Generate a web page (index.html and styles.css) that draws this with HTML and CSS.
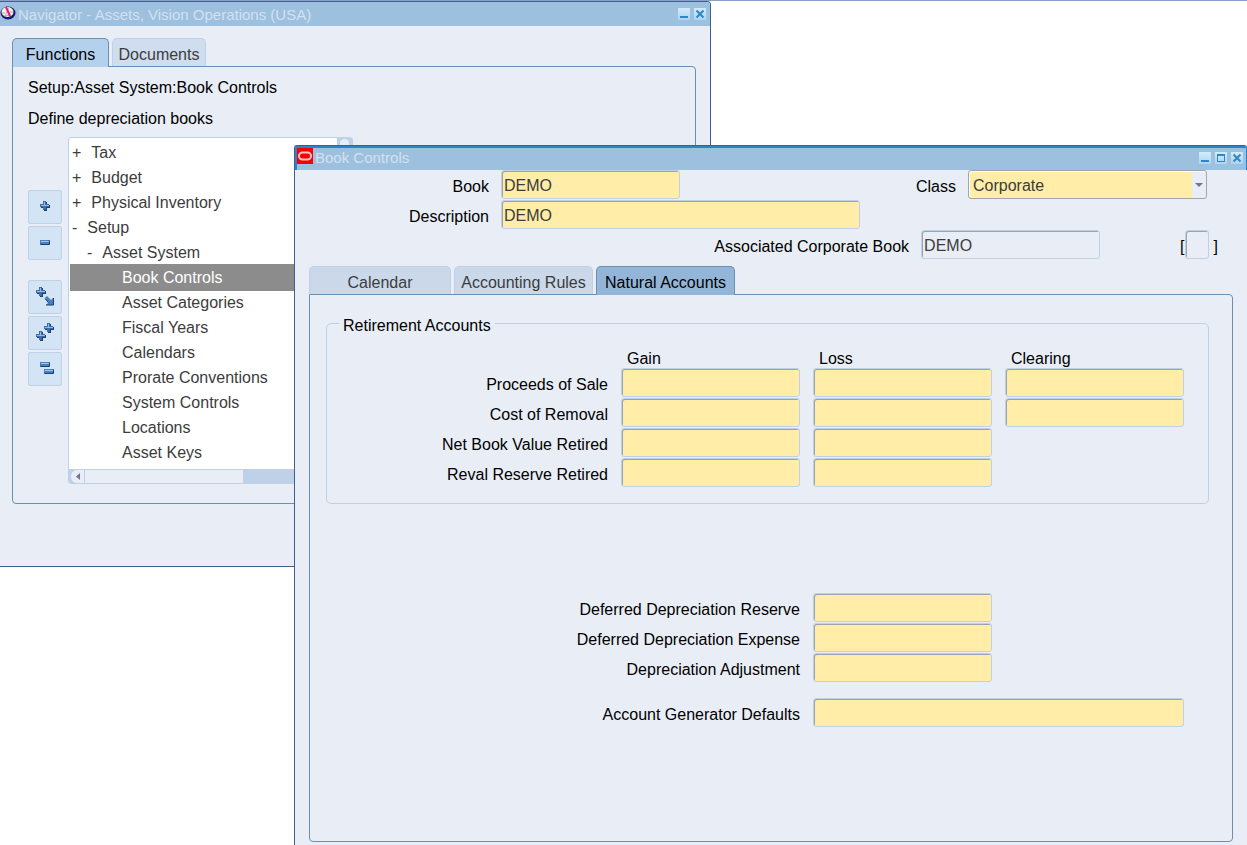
FILE: index.html
```html
<!DOCTYPE html>
<html lang="en">
<head>
<meta charset="utf-8">
<title>Book Controls</title>
<link rel="stylesheet" href="styles.css">
</head>
<body>
<main class="desktop">

  <section class="window navigator" aria-label="Navigator">
    <header class="titlebar">
      <svg class="app-icon" width="16" height="16" viewBox="0 0 16 16" aria-hidden="true">
        <ellipse cx="8" cy="8" rx="7.5" ry="6.5" fill="#1a1a6e"/>
        <ellipse cx="7.500" cy="7" rx="6" ry="5" fill="#f4f0e4"/>
        <path d="M2 8h3M10 7h3M4 11l7-1" stroke="#b4b09c" stroke-width="1"/>
        <path d="M9 3l-4 8" stroke="#e0b860" stroke-width="1"/>
        <path d="M6 2l4 9" stroke="#e0149c" stroke-width="2"/>
      </svg>
      <h1 class="title">Navigator - Assets, Vision Operations (USA)</h1>
      <div class="win-buttons">
        <button class="win-btn" aria-label="Minimize"><svg width="12" height="12" viewBox="0 0 12 12"><path d="M2 8h8v2H2z" fill="#2f86c6"/></svg></button>
        <button class="win-btn" aria-label="Close"><svg width="12" height="12" viewBox="0 0 12 12"><path d="M2.500 2.500l7 7M9.500 2.500l-7 7" stroke="#2f86c6" stroke-width="2"/></svg></button>
      </div>
    </header>
    <div class="nav-body">
      <div class="tabs" role="tablist">
        <button class="tab tab-functions" role="tab" aria-selected="true">Functions</button>
        <button class="tab tab-documents" role="tab" aria-selected="false">Documents</button>
      </div>
      <div class="panel nav-panel">
        <p class="nav-text">Setup:Asset System:Book Controls</p>
        <p class="nav-text">Define depreciation books</p>
        <div class="nav-main">
          <div class="toolbar">
            <button class="tool" aria-label="Expand"><svg width="34" height="34" viewBox="0 0 34 34"><use href="#plus" x="12" y="11"/></svg></button>
            <button class="tool" aria-label="Collapse"><svg width="34" height="34" viewBox="0 0 34 34"><use href="#minus" x="12" y="14"/></svg></button>
            <button class="tool tool-group" aria-label="Expand branch"><svg width="34" height="34" viewBox="0 0 34 34"><use href="#plus" x="8" y="7"/><path d="M17 18l2-2 4 4 2-2v7h-7l2-2z" fill="#4a7fc0"/><path d="M17 18.500l3.500 4M18 25h7.500v-7" fill="none" stroke="#1f3f70"/></svg></button>
            <button class="tool" aria-label="Expand all"><svg width="34" height="34" viewBox="0 0 34 34"><use href="#plus" x="16" y="7"/><use href="#plus" x="8" y="15"/></svg></button>
            <button class="tool" aria-label="Collapse all"><svg width="34" height="34" viewBox="0 0 34 34"><use href="#minus" x="12" y="10"/><use href="#minus" x="16" y="17"/></svg></button>
          </div>
          <div class="tree">
            <div class="tree-view">
              <ul class="tree-list">
                <li class="node"><button class="toggle">+</button>Tax</li>
                <li class="node"><button class="toggle">+</button>Budget</li>
                <li class="node"><button class="toggle">+</button>Physical Inventory</li>
                <li class="node"><button class="toggle">-</button>Setup</li>
                <li class="node node-sub"><button class="toggle">-</button>Asset System</li>
                <li class="node node-leaf selected">Book Controls</li>
                <li class="node node-leaf">Asset Categories</li>
                <li class="node node-leaf">Fiscal Years</li>
                <li class="node node-leaf">Calendars</li>
                <li class="node node-leaf">Prorate Conventions</li>
                <li class="node node-leaf">System Controls</li>
                <li class="node node-leaf">Locations</li>
                <li class="node node-leaf">Asset Keys</li>
              </ul>
              <div class="vbar"><span class="vbar-up"></span></div>
            </div>
            <div class="hbar">
              <button class="hbar-left" aria-label="Scroll left"><svg width="13" height="13" viewBox="0 0 13 13"><path d="M9 3v7L5 6.500z" fill="#6e7590"/></svg></button>
              <span class="hbar-thumb"></span>
            </div>
          </div>
        </div>
      </div>
    </div>
  </section>

  <section class="window book" aria-label="Book Controls">
    <header class="titlebar book-titlebar">
      <svg class="app-icon" width="16" height="16" viewBox="0 0 16 16" aria-hidden="true">
        <path d="M0 0h16v16H0z" fill="#f80000"/>
        <rect x="2" y="4.500" width="12" height="7" rx="3.500" fill="none" stroke="#ffc4c4" stroke-width="2"/>
      </svg>
      <h2 class="title">Book Controls</h2>
      <div class="win-buttons">
        <button class="win-btn" aria-label="Minimize"><svg width="12" height="12" viewBox="0 0 12 12"><path d="M2 8h8v2H2z" fill="#2f86c6"/></svg></button>
        <button class="win-btn" aria-label="Maximize"><svg width="12" height="12" viewBox="0 0 12 12"><path d="M2 2h8v8H2zM3 4v5h6V4z" fill="#2f86c6" fill-rule="evenodd"/></svg></button>
        <button class="win-btn" aria-label="Close"><svg width="12" height="12" viewBox="0 0 12 12"><path d="M2.500 2.500l7 7M9.500 2.500l-7 7" stroke="#2f86c6" stroke-width="2"/></svg></button>
      </div>
    </header>

    <form class="book-form">
      <div class="head">
        <div class="row">
          <label class="label head-label" for="book">Book</label>
          <input class="field" id="book" value="DEMO">
          <div class="row-end">
            <label class="label" for="class">Class</label>
            <div class="select-wrap">
              <select class="select" id="class"><option>Corporate</option></select>
            </div>
          </div>
        </div>
        <div class="row">
          <label class="label head-label" for="desc">Description</label>
          <input class="field field-desc" id="desc" value="DEMO">
        </div>
        <div class="row">
          <div class="row-end row-assoc">
            <label class="label" for="assoc">Associated Corporate Book</label>
            <input class="field readonly" id="assoc" value="DEMO" readonly>
            <div class="flex-field">
              <span class="bracket">[</span>
              <input class="field readonly flex-input" aria-label="Descriptive flexfield" readonly>
              <span class="bracket bracket-end">]</span>
            </div>
          </div>
        </div>
      </div>

      <div class="tabs book-tabs" role="tablist">
        <button type="button" class="tab tab-calendar" role="tab" aria-selected="false">Calendar</button>
        <button type="button" class="tab tab-rules" role="tab" aria-selected="false">Accounting Rules</button>
        <button type="button" class="tab tab-natural" role="tab" aria-selected="true">Natural Accounts</button>
      </div>

      <div class="panel book-panel">
        <fieldset class="retirement">
          <legend class="legend">Retirement Accounts</legend>
          <div class="grid accounts">
            <span></span>
            <span class="col-head" id="gain">Gain</span>
            <span class="col-head" id="loss">Loss</span>
            <span class="col-head" id="clearing">Clearing</span>

            <label class="label" id="sale" for="sale-gain">Proceeds of Sale</label>
            <input class="field" id="sale-gain">
            <input class="field" aria-labelledby="sale loss">
            <input class="field" aria-labelledby="sale clearing">

            <label class="label" id="removal" for="removal-gain">Cost of Removal</label>
            <input class="field" id="removal-gain">
            <input class="field" aria-labelledby="removal loss">
            <input class="field" aria-labelledby="removal clearing">

            <label class="label" id="nbv" for="nbv-gain">Net Book Value Retired</label>
            <input class="field" id="nbv-gain">
            <input class="field" aria-labelledby="nbv loss">
            <span></span>

            <label class="label" id="reval" for="reval-gain">Reval Reserve Retired</label>
            <input class="field" id="reval-gain">
            <input class="field" aria-labelledby="reval loss">
            <span></span>
          </div>
        </fieldset>

        <div class="grid defaults">
          <label class="label" for="reserve">Deferred Depreciation Reserve</label>
          <input class="field" id="reserve">
          <label class="label" for="expense">Deferred Depreciation Expense</label>
          <input class="field" id="expense">
          <label class="label" for="adjust">Depreciation Adjustment</label>
          <input class="field" id="adjust">
        </div>
        <div class="grid defaults generator">
          <label class="label" for="generator">Account Generator Defaults</label>
          <input class="field field-wide" id="generator">
        </div>
      </div>
    </form>
  </section>

</main>

<svg width="0" height="0" class="symbols" aria-hidden="true">
  <symbol id="plus" width="10" height="10" viewBox="0 0 10 10">
    <path d="M4 1h3v3h3v3H7v3H4V7H1V4h3z" fill="#1f3f70"/>
    <path d="M3 0h3v3h3v3H6v3H3V6H0V3h3z" fill="#3f6cab"/>
    <path d="M4 1h1v3h4v1H1V4h3z" fill="#8fc0ea"/>
  </symbol>
  <symbol id="minus" width="10" height="5" viewBox="0 0 10 5">
    <rect width="10" height="5" rx="1" fill="#1f3f70"/>
    <rect width="9" height="4" rx="1" fill="#4a7fc0"/>
    <path d="M1 1h8v1H1z" fill="#9fcaf0"/>
  </symbol>
</svg>
</body>
</html>
```
FILE: styles.css
```css
* { box-sizing: border-box; }

body {
  margin: 0;
  background: #fff;
  color: #000;
  font: 16px/20px "Liberation Sans", Arial, sans-serif;
}

button, input, select { font: inherit; color: inherit; margin: 0; }
button { border: 0; padding: 0; background: none; }
svg { display: block; }
.symbols { position: absolute; }

.desktop {
  position: relative;
  min-height: 100vh;
  border-top: 1px solid #8aa0c4;
  overflow: hidden;
}

/* Windows */
.window { position: absolute; background: #e9eef6; }

.navigator {
  top: 0;
  left: 0;
  width: 711px;
  border: solid #3f5f92;
  border-width: 1px 1px 1px 0;
  border-radius: 0 4px 0 0;
}

.book {
  top: 144px;
  left: 294px;
  right: 0;
  bottom: 0;
  display: flex;
  flex-direction: column;
  border: solid #3f5f92;
  border-width: 1px 0 0 1px;
  border-radius: 3px 3px 0 0;
}

.titlebar {
  display: flex;
  align-items: flex-start;
  height: 24px;
  padding: 3px 4px 0 0;
  background: #9dc0df;
  border-radius: 0 3px 0 0;
}

.book-titlebar {
  padding: 0 3px 0 0;
  border: solid #2b84c5;
  border-width: 2px 1px 0 2px;
  border-radius: 2px 2px 0 0;
}

.title {
  margin: 0;
  padding-left: 2px;
  color: #d3e1ef;
  font-size: 15px;
  font-weight: normal;
}

.win-buttons { display: flex; gap: 4px; margin-left: auto; padding-top: 3px; }
.book-titlebar .win-buttons { padding-top: 4px; }
.win-btn { width: 12px; height: 12px; background: linear-gradient(#d4ebfa, #acd4f2); }

/* Tabs and panels */
.tabs { display: flex; gap: 3px; }

.tab {
  height: 28px;
  padding-top: 4px;
  border: 1px solid #bfd1e8;
  border-bottom: 0;
  border-radius: 5px 5px 0 0;
  background: #cad8ea;
  color: #3c3c3c;
}

.tab[aria-selected="true"] {
  position: relative;
  height: 29px;
  margin-bottom: -1px;
  border-color: #6c8fb2;
  background: #93b6d8;
  color: #000;
}

.tab-functions { width: 97px; }
.tab-functions[aria-selected="true"] { background: #b3d1ec; }
.tab-documents { width: 94px; background: #cfddee; }
.tab-calendar { width: 142px; }
.tab-rules { width: 139px; }
.tab-natural { width: 139px; }

.panel { border: 1px solid #6c8fb2; border-radius: 0 4px 4px 4px; }

/* Navigator */
.nav-body { padding: 12px 14px 62px 12px; }
.nav-panel { padding: 11px 15px 19px; }
.nav-text { margin: 0 0 11px; }
.nav-text + .nav-text { margin-bottom: 8px; }
.nav-main { display: flex; align-items: flex-start; gap: 6px; }

.toolbar { display: flex; flex-direction: column; gap: 2px; padding-top: 53px; }
.tool {
  width: 34px;
  height: 34px;
  border-radius: 3px;
  background: #d3e4f4;
  box-shadow: inset 0 0 0 1px #bfd1e8;
}
.tool-group { margin-top: 18px; }

.tree {
  width: 285px;
  border: 1px solid #bfd1e8;
  border-radius: 3px;
  background: #fff;
  color: #3c3c3c;
}
.tree-view { display: flex; }
.tree-list { flex: 1; margin: 0; padding: 2px 0 4px 1px; list-style: none; }
.node {
  display: flex;
  gap: 10px;
  height: 25px;
  padding: 3px 0 0 2px;
  white-space: nowrap;
}
.toggle { height: 20px; }
.node-sub { padding-left: 17px; }
.node-leaf { padding-left: 52px; }
.selected { background: #8c8c8c; color: #fff; box-shadow: 0 -1px #8c8c8c, 0 1px #8c8c8c; }

.vbar { width: 15px; padding: 1px 3px; background: #bfd1e8; }
.vbar-up { display: block; height: 14px; border-radius: 6px 6px 0 0; background: #e9eef6; }
.hbar { display: flex; gap: 1px; padding: 1px 1px 0 2px; background: #bfd1e8; }
.hbar-left { width: 13px; border-radius: 6px 0 0 6px; background: #e9eef6; }
.hbar-thumb { width: 158px; height: 13px; background: #e9eef6; }

/* Book controls form */
.book-form { flex: 1; display: flex; flex-direction: column; padding: 0 14px 3px; }
.head { display: grid; gap: 1px; }
.row { display: flex; align-items: center; gap: 12px; }
.row-end { display: flex; align-items: center; gap: 12px; margin-left: auto; padding-right: 26px; }
.row-assoc { padding-right: 15px; }
.label { padding-top: 5px; text-align: right; white-space: nowrap; }
.head-label { width: 180px; }

.field {
  width: 179px;
  height: 29px;
  padding: 2px 2px 0;
  border: 1px solid #bfd1e8;
  border-radius: 3px;
  background: #ffeda8;
  box-shadow: inset 1px 1px #9da3ae;
  color: #3c3c3c;
  outline: 0;
}
.field-desc { width: 359px; }
.field-wide { width: 371px; }
.readonly { background: #e9eef6; }

.flex-field { display: flex; align-items: center; margin-left: 68px; }
.flex-input { width: 24px; }
.bracket { padding-top: 5px; }
.bracket-end { padding-left: 5px; }

.select-wrap { position: relative; }
.select {
  display: block;
  width: 239px;
  height: 29px;
  padding: 2px 18px 0 4px;
  border: 1px solid #a0a4ac;
  border-radius: 3px;
  background: linear-gradient(#e9eef6, #e9eef6) right / 14px 100% no-repeat, #ffeda8;
  box-shadow: inset 1px 1px #fff;
  color: #3c3c3c;
  appearance: none;
}
.select-wrap::after {
  content: "";
  position: absolute;
  top: 13px;
  right: 4px;
  border: 4px solid transparent;
  border-top-color: #6e7590;
  pointer-events: none;
}

.book-tabs { margin-top: 7px; }
.book-panel { flex: 1; padding: 16px 23px 0 16px; }

.grid {
  display: grid;
  grid-template-columns: 1fr repeat(3, 179px);
  align-items: center;
  gap: 1px 13px;
}

.retirement {
  min-width: 0;
  margin: 0;
  padding: 15px 24px 16px 0;
  border: 1px solid #bfd1e8;
  border-radius: 5px;
}
.legend { margin-left: 12px; padding: 5px 4px 0; }
.col-head { padding-left: 6px; line-height: 16px; }

.defaults { grid-template-columns: 1fr 371px; margin-top: 89px; padding-right: 25px; }
.generator { margin-top: 16px; }
```
